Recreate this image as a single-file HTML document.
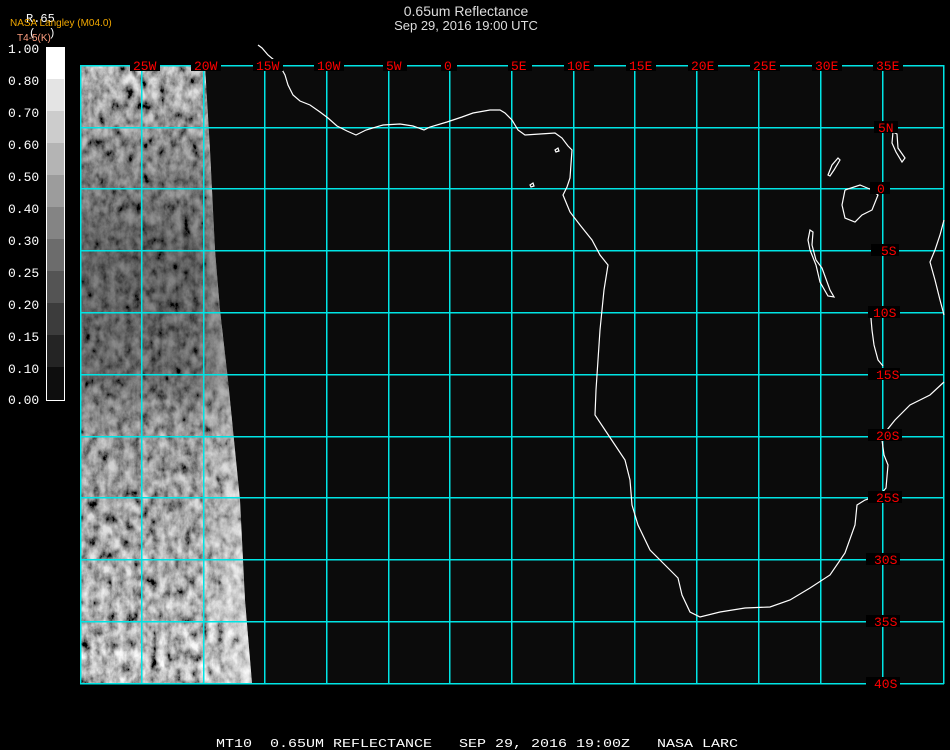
<!DOCTYPE html>
<html><head><meta charset="utf-8"><style>
html,body{margin:0;padding:0;background:#000;width:950px;height:750px;overflow:hidden}
svg{display:block}
.t{font-family:"Liberation Sans",sans-serif;fill:#ddd}
.m{font-family:"Liberation Mono",monospace}
.lab{font-family:"Liberation Mono",monospace;font-size:13px;fill:#f00}
.pre{white-space:pre}
</style></head><body>
<svg width="950" height="750" viewBox="0 0 950 750" xmlns="http://www.w3.org/2000/svg">
<defs>
<filter id="n" x="0" y="0" width="100%" height="100%">
<feTurbulence type="fractalNoise" baseFrequency="0.12 0.08" numOctaves="5" seed="3"/>
<feColorMatrix type="matrix" values="1.1 1.1 0 0 -0.6  1.1 1.1 0 0 -0.6  1.1 1.1 0 0 -0.6  0 0 0 0 1"/>
</filter>
<clipPath id="sc"><polygon points="80,65 205,65 210,150 215,250 220,310 228,380 240,500 245,600 252,683 80,683"/></clipPath>
<linearGradient id="dk" x1="0" y1="0" x2="0" y2="1">
<stop offset="0" stop-color="#000" stop-opacity="0.05"/>
<stop offset="0.15" stop-color="#000" stop-opacity="0.3"/>
<stop offset="0.3" stop-color="#000" stop-opacity="0.5"/>
<stop offset="0.5" stop-color="#000" stop-opacity="0.45"/>
<stop offset="0.6" stop-color="#000" stop-opacity="0.2"/>
<stop offset="1" stop-color="#000" stop-opacity="0"/>
</linearGradient>
<linearGradient id="edge" x1="0" y1="0" x2="1" y2="0">
<stop offset="0.65" stop-color="#fff" stop-opacity="0"/>
<stop offset="1" stop-color="#fff" stop-opacity="0.5"/>
</linearGradient>
</defs>
<rect x="80" y="65" width="864" height="618" fill="#0b0b0b"/>
<g clip-path="url(#sc)">
<rect x="80" y="65" width="175" height="618" fill="#888" filter="url(#n)"/>
<rect x="80" y="65" width="175" height="618" fill="url(#dk)"/>
<rect x="80" y="65" width="175" height="618" fill="url(#edge)"/>
</g>
<g fill="#00e5e5" shape-rendering="crispEdges">
<rect x="80" y="65" width="1.5" height="619"/><rect x="141" y="65" width="1.5" height="619"/><rect x="203" y="65" width="1.5" height="619"/><rect x="264" y="65" width="1.5" height="619"/><rect x="326" y="65" width="1.5" height="619"/><rect x="388" y="65" width="1.5" height="619"/><rect x="449" y="65" width="1.5" height="619"/><rect x="511" y="65" width="1.5" height="619"/><rect x="573" y="65" width="1.5" height="619"/><rect x="634" y="65" width="1.5" height="619"/><rect x="696" y="65" width="1.5" height="619"/><rect x="758" y="65" width="1.5" height="619"/><rect x="820" y="65" width="1.5" height="619"/><rect x="882" y="65" width="1.5" height="619"/><rect x="943" y="65" width="1.5" height="619"/>
<rect x="80" y="65" width="864" height="1.5"/><rect x="80" y="127" width="864" height="1.5"/><rect x="80" y="188" width="864" height="1.5"/><rect x="80" y="250" width="864" height="1.5"/><rect x="80" y="312" width="864" height="1.5"/><rect x="80" y="374" width="864" height="1.5"/><rect x="80" y="436" width="864" height="1.5"/><rect x="80" y="497" width="864" height="1.5"/><rect x="80" y="559" width="864" height="1.5"/><rect x="80" y="621" width="864" height="1.5"/><rect x="80" y="683" width="864" height="1.5"/>
</g>
<g stroke="#fff" stroke-width="1.2" fill="none">
<polyline points="258,45 262,48 268,55 274,60 280,66 285,75 288,85 293,95 300,101 310,105 320,112 328,118 337,126 347,131 356,135 366,130 383,125 400,124 413,126 424,130 430,127 447,122 462,117 473,113 490,110 500,110 505,113 512,120 518,130 525,135 540,134 555,133 562,138 568,146 572,150 570,178 567,187 563,195 570,212 580,225 592,240 600,255 608,265 604,290 600,330 598,360 596,390 595,415 605,430 615,445 625,460 630,480 632,505 638,525 650,550 665,565 678,578 682,595 690,612 700,617 720,612 745,608 770,607 790,600 810,588 830,575 845,553 855,525 857,505 865,500 880,495 886,488 888,465 884,455 882,440 887,430 895,420 910,405 930,395 944,382"/>
<polyline points="944,220 940,235 935,250 930,262 935,280 940,300 944,315"/>
<polyline points="870,307 872,330 874,345 878,360 883,366"/>
<polygon points="810,230 813,232 812,245 816,260 822,268 830,290 834,297 828,296 820,282 816,265 810,250 808,240"/>
<polygon points="893,132 897,134 898,148 905,158 902,162 896,152 892,143"/>
<polygon points="828,175 832,165 838,158 840,160 834,170 830,176"/>
<polyline points="845,190 860,185 872,190 878,195 872,210 862,215 855,222 845,218 842,205 845,190"/>
<polygon points="555,150 558,148 559,151 556,152"/>
<polygon points="530,185 533,183 534,186 531,187"/>
</g>
<g>
<rect x="130" y="59" width="30" height="12" fill="#000"/><text class="lab" x="133" y="70">25W</text>
<rect x="191" y="59" width="30" height="12" fill="#000"/><text class="lab" x="194" y="70">20W</text>
<rect x="253" y="59" width="30" height="12" fill="#000"/><text class="lab" x="256" y="70">15W</text>
<rect x="314" y="59" width="30" height="12" fill="#000"/><text class="lab" x="317" y="70">10W</text>
<rect x="383" y="59" width="24" height="12" fill="#000"/><text class="lab" x="386" y="70">5W</text>
<rect x="441" y="59" width="16" height="12" fill="#000"/><text class="lab" x="444" y="70">0</text>
<rect x="508" y="59" width="24" height="12" fill="#000"/><text class="lab" x="511" y="70">5E</text>
<rect x="564" y="59" width="30" height="12" fill="#000"/><text class="lab" x="567" y="70">10E</text>
<rect x="626" y="59" width="30" height="12" fill="#000"/><text class="lab" x="629" y="70">15E</text>
<rect x="688" y="59" width="30" height="12" fill="#000"/><text class="lab" x="691" y="70">20E</text>
<rect x="750" y="59" width="30" height="12" fill="#000"/><text class="lab" x="753" y="70">25E</text>
<rect x="812" y="59" width="30" height="12" fill="#000"/><text class="lab" x="815" y="70">30E</text>
<rect x="873" y="59" width="30" height="12" fill="#000"/><text class="lab" x="876" y="70">35E</text>
</g>
<g>
<rect x="874" y="121" width="24" height="12" fill="#000"/><text class="lab" x="878" y="132">5N</text>
<rect x="870" y="182" width="20" height="12" fill="#000"/><text class="lab" x="877" y="193">0</text>
<rect x="871" y="244" width="28" height="12" fill="#000"/><text class="lab" x="881" y="255">5S</text>
<rect x="868" y="306" width="32" height="12" fill="#000"/><text class="lab" x="873" y="317">10S</text>
<rect x="868" y="368" width="32" height="12" fill="#000"/><text class="lab" x="876" y="379">15S</text>
<rect x="868" y="429" width="34" height="12" fill="#000"/><text class="lab" x="876" y="440">20S</text>
<rect x="868" y="491" width="34" height="12" fill="#000"/><text class="lab" x="876" y="502">25S</text>
<rect x="866" y="553" width="34" height="12" fill="#000"/><text class="lab" x="874" y="564">30S</text>
<rect x="866" y="615" width="34" height="12" fill="#000"/><text class="lab" x="874" y="626">35S</text>
<rect x="866" y="677" width="34" height="12" fill="#000"/><text class="lab" x="874" y="688">40S</text>
</g>
<g>
<rect x="46" y="47" width="18" height="32" fill="#fff"/>
<rect x="46" y="79" width="18" height="32" fill="#e4e4e4"/>
<rect x="46" y="111" width="18" height="32" fill="#cccccc"/>
<rect x="46" y="143" width="18" height="32" fill="#b4b4b4"/>
<rect x="46" y="175" width="18" height="32" fill="#9c9c9c"/>
<rect x="46" y="207" width="18" height="32" fill="#848484"/>
<rect x="46" y="239" width="18" height="32" fill="#6c6c6c"/>
<rect x="46" y="271" width="18" height="32" fill="#545454"/>
<rect x="46" y="303" width="18" height="32" fill="#3c3c3c"/>
<rect x="46" y="335" width="18" height="32" fill="#242424"/>
<rect x="46" y="367" width="18" height="33" fill="#0e0e0e"/>
<rect x="46.5" y="47.5" width="18" height="353" fill="none" stroke="#fff" stroke-width="1"/>
</g>
<g class="m" fill="#fff" font-size="13">
<text x="8" y="53">1.00</text><text x="8" y="85">0.80</text><text x="8" y="117">0.70</text>
<text x="8" y="149">0.60</text><text x="8" y="181">0.50</text><text x="8" y="213">0.40</text>
<text x="8" y="245">0.30</text><text x="8" y="277">0.25</text><text x="8" y="309">0.20</text>
<text x="8" y="341">0.15</text><text x="8" y="373">0.10</text><text x="8" y="404">0.00</text>
</g>
<text class="m" x="26" y="22" fill="#fff" font-size="12">R.65</text>
<text class="m pre" x="29" y="36" fill="#fff" font-size="11">(  )</text>
<text x="10" y="26" font-family="Liberation Sans,sans-serif" font-size="10" fill="#f2a800">NASA Langley (M04.0)</text>
<text x="17" y="41" font-family="Liberation Sans,sans-serif" font-size="10" fill="#ff9f80">T4-5(K)</text>
<text class="t" x="466" y="16" font-size="14" text-anchor="middle">0.65um Reflectance</text>
<text class="t" x="466" y="30" font-size="13" text-anchor="middle">Sep 29, 2016 19:00 UTC</text>
<text class="m pre" x="216" y="747" fill="#fff" font-size="12" textLength="522" lengthAdjust="spacingAndGlyphs">MT10  0.65UM REFLECTANCE   SEP 29, 2016 19:00Z   NASA LARC</text>
</svg>
</body></html>
